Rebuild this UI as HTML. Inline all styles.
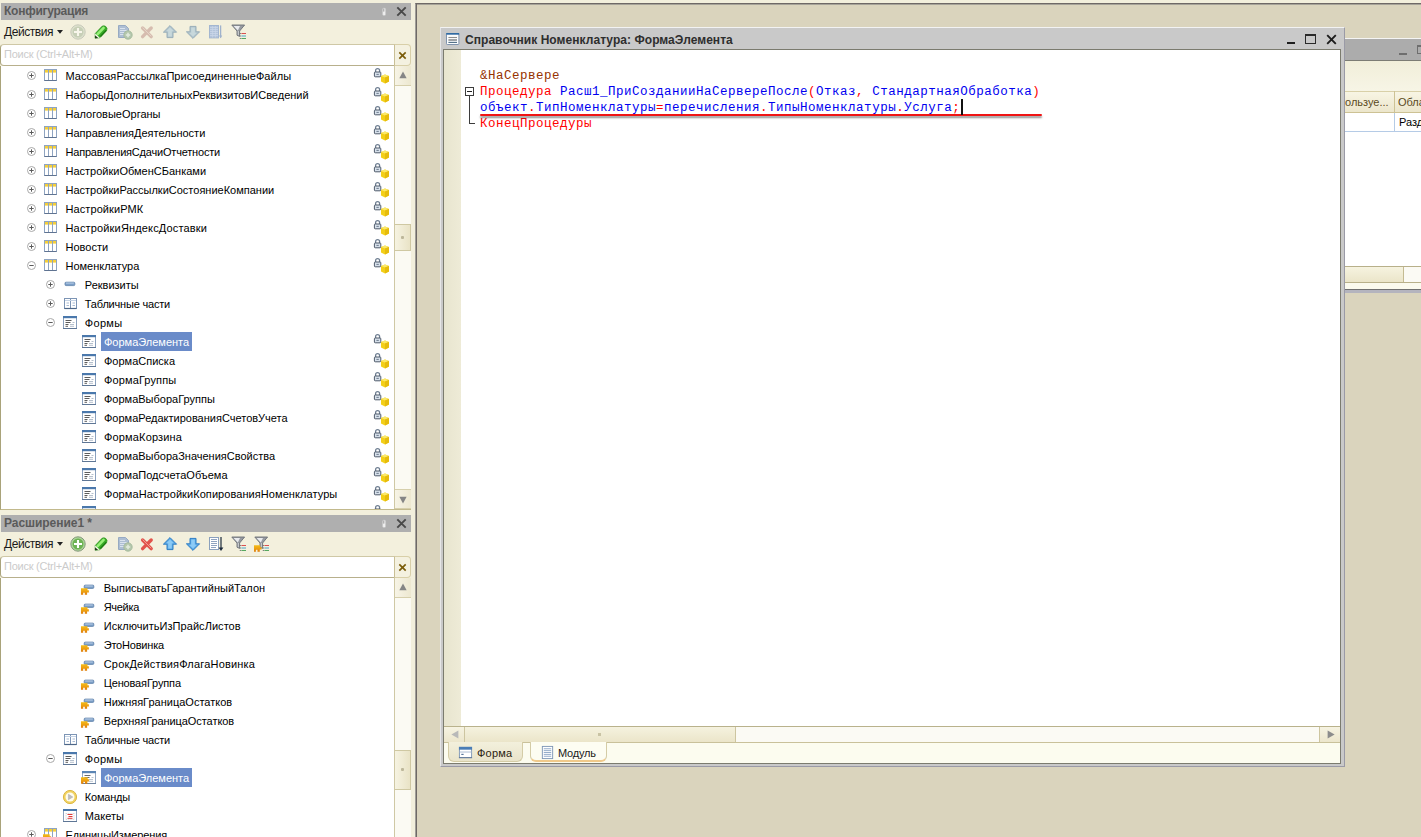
<!DOCTYPE html>
<html lang="ru"><head><meta charset="utf-8"><title>Конфигуратор</title>
<style>

html,body{margin:0;padding:0}
body{width:1421px;height:837px;overflow:hidden;position:relative;background:#f2efdc;
 font-family:"Liberation Sans",sans-serif;font-size:12px;color:#000}
.ic{position:absolute;overflow:visible}
.ptitle{position:absolute;left:1px;width:410px;height:17px;background:#afafaf}
.ptitle span{position:absolute;left:3px;top:0;line-height:16px;font-weight:bold;font-size:12px;color:#5a5a5a;letter-spacing:-0.6px;white-space:nowrap}
.tbar{position:absolute;left:0;width:412px;height:24px;background:#f3f0dd}
.tbar .act{position:absolute;left:4px;top:4px;line-height:17px;font-size:12px;color:#1a1a1a;white-space:nowrap;letter-spacing:-0.45px}
.search{position:absolute;left:0;width:395px;height:22px;box-sizing:border-box;background:#fff;border:1px solid #b8b08c;border-top-color:#cfc8a6;border-left-color:#aaa47c;border-radius:4px 0 0 4px}
.search span{position:absolute;left:3px;top:2px;line-height:15px;font-size:11px;color:#cbcbcb;white-space:nowrap;letter-spacing:-0.24px}
.sbtn{position:absolute;left:394px;width:17px;height:22px;box-sizing:border-box;background:#f4f1e0;border:1px solid #d8cfa8;border-left:1px solid #c9bf95;border-radius:0 4px 4px 0}
.tree{position:absolute;left:0;width:411px;background:#fff;overflow:hidden;border-left:1px solid #a9a37a;border-bottom:1px solid #c2b98c;box-sizing:border-box}
.tree>*{margin-left:-1px}
.tx{position:absolute;height:19px;line-height:20px;font-size:11px;white-space:nowrap;color:#000;padding:0 3px;margin-left:-4px}
.tx.sel{background:#6a8bc9;color:#fff}
.vsb{position:absolute;left:394px;top:0;width:17px;background:#fbfaf3;border-left:1px solid #cfc8a4;border-right:1px solid #d8d2b4}
.vbtn{position:absolute;left:0;width:17px;height:20px;background:linear-gradient(90deg,#f7f4e6,#ece7cf);border-bottom:1px solid #d6cfac;box-sizing:border-box}
.vthumb{position:absolute;left:0;width:16px;background:linear-gradient(90deg,#f6f3e2,#e9e3c6);border:1px solid #cfc8a2;border-left:none;box-sizing:border-box}
.mdi{position:absolute;left:415px;top:3px;width:1010px;height:840px;background:#dad4bd;border-left:1px solid #a09e98;border-top:1px solid #6e6966;box-shadow:inset 1px 0 0 #6e6966,inset 0 1px 0 #a6a399;box-sizing:border-box;overflow:hidden}
.win{position:absolute;background:#c9c9c9;box-sizing:border-box}
.code{position:absolute;white-space:pre;font-family:"Liberation Mono",monospace;font-size:12.5px;letter-spacing:0.5px;line-height:17px;height:16px}
.kw{color:#f00}.id{color:#0000f0}.pp{color:#963200}
.vthumb i{position:absolute;left:6px;top:50%;margin-top:-2px;width:3px;height:3px;background:#bdb79a;border-radius:1px}

</style></head>
<body>
<svg width="0" height="0" style="position:absolute">
<defs>

<symbol id="plus" viewBox="0 0 9 9"><circle cx="4.5" cy="4.5" r="4" fill="#fff" stroke="#a9a9a9" stroke-width="1"/><path d="M2.3 4.5H6.7M4.5 2.3V6.7" stroke="#5a5a5a" stroke-width="1"/></symbol>
<symbol id="minus" viewBox="0 0 9 9"><circle cx="4.5" cy="4.5" r="4" fill="#fff" stroke="#a9a9a9" stroke-width="1"/><path d="M2.3 4.5H6.7" stroke="#5a5a5a" stroke-width="1"/></symbol>

<symbol id="tbl" viewBox="0 0 16 16"><rect x="1.5" y="1.5" width="12" height="11" fill="#fff" stroke="#8fa4c1" stroke-width="1"/><rect x="2" y="2" width="11" height="2.6" fill="#f5cf3a"/><path d="M5.5 1.5V12.5M9.5 1.5V12.5" stroke="#8fa4c1" stroke-width="1"/><path d="M1.5 12.5H13.5" stroke="#5f7391" stroke-width="1"/></symbol>
<symbol id="tbladopt" viewBox="0 0 16 16"><use href="#tbl"/><use href="#puzzle" x="0" y="7"/></symbol>

<symbol id="attr" viewBox="0 0 16 16"><rect x="2" y="5.2" width="9.8" height="3.4" rx="1" fill="#7c9fc8" stroke="#5f81aa" stroke-width="0.8"/><path d="M3 6.1H10.8" stroke="#c0d4ea" stroke-width="0.9"/></symbol>
<linearGradient id="pzg" x1="0" y1="0" x2="0" y2="1"><stop offset="0" stop-color="#f4bd1a"/><stop offset="0.5" stop-color="#eda010"/><stop offset="1" stop-color="#de7c08"/></linearGradient>
<symbol id="puzzle" viewBox="0 0 9 8" width="9" height="8"><path d="M0 0.2H6.7V2.3H8.1V4.4H6.3V6.8H4V4.7H2.4V6.8H0Z" fill="url(#pzg)"/></symbol>
<symbol id="attradopt" viewBox="0 0 16 16"><rect x="5.2" y="5.1" width="9.6" height="3.3" rx="1" fill="#7c9fc8" stroke="#5f81aa" stroke-width="0.8"/><path d="M6.2 6H13.8" stroke="#c6d8ec" stroke-width="0.9"/><use href="#puzzle" x="1.8" y="8"/></symbol>

<symbol id="tabpart" viewBox="0 0 16 16"><rect x="1.5" y="2.5" width="12" height="10" fill="#fff" stroke="#7d95b5" stroke-width="1"/><path d="M7.5 2.5V12.5" stroke="#7d95b5" stroke-width="1"/><path d="M2 4.5H13" stroke="#c4d2e4" stroke-width="1"/><path d="M3.5 7H6M9.5 7H12M3.5 9.5H6M9.5 9.5H12" stroke="#a9bbd3" stroke-width="1"/><path d="M1.5 12.5H13.5" stroke="#4d6688" stroke-width="1.2"/></symbol>

<symbol id="form" viewBox="0 0 16 16"><rect x="1.5" y="1.5" width="13" height="12" fill="#fff" stroke="#8aa0bd" stroke-width="1"/><rect x="1" y="1" width="14" height="2.2" fill="#4a78ac"/><path d="M3.5 5.5H9.5M3.5 7.5H8.5M3.5 9.5H6.5M3.5 11.3H6" stroke="#5c5c5c" stroke-width="1"/><path d="M10.5 7.5H12.5M8 9.5H12M8 11.3H12" stroke="#b4bfcc" stroke-width="1"/><path d="M1 13.5H15" stroke="#5e7695" stroke-width="1"/></symbol>
<symbol id="formadopt" viewBox="0 0 16 16"><g opacity="0.9"><use href="#form"/></g><use href="#puzzle" x="0" y="7"/></symbol>

<symbol id="cmd" viewBox="0 0 16 16"><circle cx="8" cy="8" r="6.6" fill="#f1d362" stroke="#ddb846" stroke-width="1"/><circle cx="8" cy="8" r="4.5" fill="#fffcee"/><path d="M6.4 5.2L10.8 8L6.4 10.8Z" fill="#bdbdbd" stroke="#a8a8a8" stroke-width="0.5"/></symbol>

<symbol id="maket" viewBox="0 0 16 16"><rect x="1.5" y="1.5" width="13" height="12" fill="#fff" stroke="#8aa0bd" stroke-width="1"/><rect x="1" y="1" width="14" height="2" fill="#4a78ac"/><path d="M4 5V12M12 5V12M4 5.5H12M4 11.5H12" stroke="#c9c9d2" stroke-width="0.8" stroke-dasharray="1.2 1"/><path d="M5.5 6.5H10.5M6.5 8.5H10.5M5.5 10.3H10.5" stroke="#e23a3a" stroke-width="1"/><path d="M1 13.5H15" stroke="#5e7695" stroke-width="1"/></symbol>

<symbol id="lock" viewBox="0 0 18 18"><path d="M2.6 5.4V3.6Q2.6 1.6 4.6 1.6Q6.6 1.6 6.6 3.6V5.4" fill="none" stroke="#6f7f92" stroke-width="1.3"/><rect x="1.4" y="5" width="6.4" height="4.8" rx="0.8" fill="#d7e0ea" stroke="#4f5b6b" stroke-width="1"/><path d="M3.4 7.4H5.8" stroke="#6d7c8f" stroke-width="1"/>
<path d="M8 9L12 7.4L16 9V14.4L12 16.4L8 14.4Z" fill="#f3cf19"/><path d="M8 9L12 10.6L16 9L12 7.4Z" fill="#fbe86a"/><path d="M12 10.6V16.4L16 14.4V9Z" fill="#e6bc0c"/></symbol>

<symbol id="pin" viewBox="0 0 12 12"><rect x="4.6" y="2" width="3" height="7.6" rx="1.4" fill="#efefef" stroke="#c4c4c4" stroke-width="0.6"/><rect x="5.3" y="2.6" width="1" height="3" fill="#9a9a9a"/></symbol>
<symbol id="closex" viewBox="0 0 11 11"><path d="M1.3 1.3L9.7 9.7M9.7 1.3L1.3 9.7" stroke="#484848" stroke-width="1.9" stroke-linecap="butt"/></symbol>
<symbol id="brownx" viewBox="0 0 11 11"><path d="M1.6 1.6L9.4 9.4M9.4 1.6L1.6 9.4" stroke="#7a5c0a" stroke-width="2"/></symbol>
<symbol id="arrup" viewBox="0 0 9 8"><path d="M4.5 0.2L8.6 7.6H0.4Z" fill="#858585"/></symbol>
<symbol id="arrdn" viewBox="0 0 9 8"><path d="M4.5 7.8L8.6 0.4H0.4Z" fill="#858585"/></symbol>
<symbol id="arrlt" viewBox="0 0 8 9"><path d="M0.4 4.5L7.4 0.6V8.4Z" fill="#b9b9b9"/></symbol>
<symbol id="arrrt" viewBox="0 0 8 9"><path d="M7.6 4.5L0.6 0.6V8.4Z" fill="#8c8c8c"/></symbol>

<!-- toolbar icons (16x16) -->
<symbol id="t_add" viewBox="0 0 16 16"><circle cx="8" cy="8" r="7.2" fill="#acd698" stroke="#84987c" stroke-width="1"/><circle cx="8" cy="8" r="5.5" fill="#6db254"/><path d="M8 4V12M4 8H12" stroke="#fff" stroke-width="2.1"/></symbol>
<symbol id="t_edit" viewBox="0 0 16 16"><path d="M2 14.3L2.2 9.5L9 2.2Q11.2 1 12.9 2.6Q14.9 4.4 13.7 6.4L6.8 13.8Z" fill="#39ad27" stroke="#2b8a1f" stroke-width="0.6"/><path d="M4.6 10.2L10.6 3.9" stroke="#98f078" stroke-width="2.6" stroke-linecap="round"/><path d="M7.4 12.6L13.3 6.3" stroke="#1f7d14" stroke-width="1.5"/><path d="M2 14.3L2.2 9.5L6.8 13.8Z" fill="#fbfbf0"/><path d="M2 14.3L2.1 11.2L5.2 14Z" fill="#1c3a12"/></symbol>
<symbol id="t_copy" viewBox="0 0 16 16"><path d="M1.5 1.5H8.5L11.5 4.5V13.5H1.5Z" fill="#adbed3" stroke="#97aac2" stroke-width="1"/><path d="M3 4.5H8M3 6.5H10M3 8.5H10M3 10.5H7" stroke="#d9e2ee" stroke-width="1"/><circle cx="11" cy="11" r="4.2" fill="#b4c7ad" stroke="#a0b697" stroke-width="0.8"/><path d="M11 8.8V13.2M8.8 11H13.2" stroke="#e2ebde" stroke-width="1.5"/></symbol>
<symbol id="t_del" viewBox="0 0 16 16"><path d="M3.6 4L12.2 12.6M12.2 4L3.6 12.6" stroke="#e2534b" stroke-width="3.4" stroke-linecap="round"/><path d="M3.8 3.8L12 12" stroke="#f09a90" stroke-width="1" stroke-linecap="round"/></symbol>
<symbol id="t_up" viewBox="0 0 16 16"><path d="M8 1.6L14.6 8.2H11V13.6H5V8.2H1.4Z" fill="#5aa9e6" stroke="#2f7ec4" stroke-width="1" stroke-linejoin="round"/><path d="M8 3.4L11.8 7.2H9.8V12.4H6.2V7.2H4.2Z" fill="#8ccbf6"/></symbol>
<symbol id="t_dn" viewBox="0 0 16 16"><path d="M8 14.4L14.6 7.8H11V2.4H5V7.8H1.4Z" fill="#5aa9e6" stroke="#2f7ec4" stroke-width="1" stroke-linejoin="round"/><path d="M8 12.6L11.8 8.8H9.8V3.6H6.2V8.8H4.2Z" fill="#8ccbf6"/></symbol>
<symbol id="t_sort" viewBox="0 0 16 16"><rect x="1.5" y="1.5" width="9" height="12" fill="#fff" stroke="#8aa0bd" stroke-width="1"/><path d="M3 3.5H9M3 5.5H9M3 7.5H9M3 9.5H9M3 11.5H8" stroke="#8ea3c0" stroke-width="1"/><path d="M13 1V13" stroke="#1c2a3c" stroke-width="1.2"/><path d="M10.6 11.4L13 15L15.4 11.4Z" fill="#1c2a3c"/></symbol>
<symbol id="t_filter" viewBox="0 0 16 16"><path d="M0.8 1H13.6L8.6 7V12.4L6 11.2V7Z" fill="#979ba1" stroke="#6c7077" stroke-width="0.9" stroke-linejoin="round"/><path d="M2.6 1.9H9L6.8 6.4Z" fill="#e9ebee"/><path d="M7.3 7V11.2" stroke="#d7dadd" stroke-width="0.9"/><path d="M10.4 9.5H15" stroke="#d85050" stroke-width="1"/><path d="M10.4 12H15" stroke="#4aa3c8" stroke-width="1"/><path d="M10.4 14.5H15" stroke="#55a860" stroke-width="1"/><path d="M8.8 9.5H9.8M8.8 12H9.8M8.8 14.5H9.8" stroke="#666" stroke-width="1"/></symbol>
<symbol id="t_sortd" viewBox="0 0 16 16"><rect x="1.5" y="1.5" width="9" height="12.4" fill="#b3c4db" stroke="#a3b6d0" stroke-width="1"/><path d="M2 3.5H10M2 5.5H10M2 7.5H10M2 9.5H10M2 11.5H10" stroke="#c9d6e8" stroke-width="0.8"/><path d="M4.5 2V13.5M7.5 2V13.5" stroke="#c9d6e8" stroke-width="0.6"/><path d="M12.6 1.4V13.6" stroke="#9fb2cc" stroke-width="1.3"/><path d="M11 11.6L12.6 14.2L14.2 11.6Z" fill="#9fb2cc"/></symbol>
<symbol id="t_filter2" viewBox="0 0 16 16"><use href="#t_filter"/><use href="#puzzle" x="-0.5" y="9"/></symbol>

<symbol id="w_mod" viewBox="0 0 16 16"><rect x="1.5" y="2.5" width="12.4" height="11" rx="0.8" fill="#fbfcfd" stroke="#7f93ad" stroke-width="1"/><rect x="1.2" y="2" width="13" height="1.7" fill="#2f6aa3"/><path d="M3.4 6.5H12" stroke="#8d8d8d" stroke-width="1.1"/><path d="M3.4 9H12" stroke="#545a62" stroke-width="1.1"/><path d="M3.4 11.4H12" stroke="#4d6b84" stroke-width="1.1"/></symbol>
<symbol id="tab_form" viewBox="0 0 16 16"><rect x="1.5" y="2.5" width="13" height="11" fill="#fff" stroke="#7f97b6" stroke-width="1"/><rect x="1" y="2" width="14" height="3" fill="#4a7db6"/><path d="M1.5 7.5H14.5" stroke="#a7b9d0" stroke-width="1"/><path d="M3.5 10H6" stroke="#4f6f96" stroke-width="1.2"/><path d="M1 13.5H15" stroke="#5e7695" stroke-width="1"/></symbol>
<symbol id="tab_mod" viewBox="0 0 16 16"><rect x="2.5" y="1.5" width="11" height="13" fill="#fff" stroke="#7f97b6" stroke-width="1"/><path d="M4 4H12M4 6H12M4 8H12M4 10H12M4 12H12" stroke="#8ea7c6" stroke-width="1"/></symbol>

</defs>
</svg>

<!-- ===== left panel 1 ===== -->
<div class="ptitle" style="top:3px"><span style="letter-spacing:-0.25px">Конфигурация</span>
<svg class="ic" style="left:377px;top:3px" width="12" height="12"><use href="#pin"/></svg>
<svg class="ic" style="left:395px;top:3px" width="11" height="11"><use href="#closex"/></svg>
</div>
<div class="tbar" style="top:20px"><span class="act">Действия</span>
<svg class="ic" style="left:57px;top:10px" width="6" height="4"><path d="M0 0H6L3 3.8Z" fill="#222"/></svg>
<svg class="ic" style="left:70px;top:4px;opacity:.42;filter:grayscale(.65)" width="16" height="16"><use href="#t_add"/></svg>
<svg class="ic" style="left:93px;top:4px" width="16" height="16"><use href="#t_edit"/></svg>
<svg class="ic" style="left:117px;top:4px" width="16" height="16"><use href="#t_copy"/></svg>
<svg class="ic" style="left:139px;top:4px;opacity:.36;filter:grayscale(.55)" width="16" height="16"><use href="#t_del"/></svg>
<svg class="ic" style="left:162px;top:4px;opacity:.55;filter:grayscale(.5)" width="16" height="16"><use href="#t_up"/></svg>
<svg class="ic" style="left:185px;top:4px;opacity:.55;filter:grayscale(.5)" width="16" height="16"><use href="#t_dn"/></svg>
<svg class="ic" style="left:208px;top:4px" width="16" height="16"><use href="#t_sortd"/></svg>
<svg class="ic" style="left:231px;top:4px" width="16" height="16"><use href="#t_filter"/></svg></div>
<div class="search" style="top:44px"><span>Поиск (Ctrl+Alt+M)</span></div>
<div class="sbtn" style="top:44px"><svg width="9" height="9" style="position:absolute;left:3px;top:6px"><use href="#brownx"/></svg></div>
<div class="tree" style="top:66px;height:444px">
<svg class="ic" style="left:27px;top:5px" width="9" height="9"><use href="#plus"/></svg>
<svg class="ic" style="left:43px;top:2px" width="16" height="16"><use href="#tbl"/></svg>
<span class="tx" style="left:65.5px;top:0px;letter-spacing:0.055px">МассоваяРассылкаПрисоединенныеФайлы</span>
<svg class="ic" style="left:373px;top:1px" width="18" height="18"><use href="#lock"/></svg>
<svg class="ic" style="left:27px;top:24px" width="9" height="9"><use href="#plus"/></svg>
<svg class="ic" style="left:43px;top:21px" width="16" height="16"><use href="#tbl"/></svg>
<span class="tx" style="left:65.5px;top:19px">НаборыДополнительныхРеквизитовИСведений</span>
<svg class="ic" style="left:373px;top:20px" width="18" height="18"><use href="#lock"/></svg>
<svg class="ic" style="left:27px;top:43px" width="9" height="9"><use href="#plus"/></svg>
<svg class="ic" style="left:43px;top:40px" width="16" height="16"><use href="#tbl"/></svg>
<span class="tx" style="left:65.5px;top:38px">НалоговыеОрганы</span>
<svg class="ic" style="left:373px;top:39px" width="18" height="18"><use href="#lock"/></svg>
<svg class="ic" style="left:27px;top:62px" width="9" height="9"><use href="#plus"/></svg>
<svg class="ic" style="left:43px;top:59px" width="16" height="16"><use href="#tbl"/></svg>
<span class="tx" style="left:65.5px;top:57px">НаправленияДеятельности</span>
<svg class="ic" style="left:373px;top:58px" width="18" height="18"><use href="#lock"/></svg>
<svg class="ic" style="left:27px;top:81px" width="9" height="9"><use href="#plus"/></svg>
<svg class="ic" style="left:43px;top:78px" width="16" height="16"><use href="#tbl"/></svg>
<span class="tx" style="left:65.5px;top:76px;letter-spacing:-0.2px">НаправленияСдачиОтчетности</span>
<svg class="ic" style="left:373px;top:77px" width="18" height="18"><use href="#lock"/></svg>
<svg class="ic" style="left:27px;top:100px" width="9" height="9"><use href="#plus"/></svg>
<svg class="ic" style="left:43px;top:97px" width="16" height="16"><use href="#tbl"/></svg>
<span class="tx" style="left:65.5px;top:95px">НастройкиОбменСБанками</span>
<svg class="ic" style="left:373px;top:96px" width="18" height="18"><use href="#lock"/></svg>
<svg class="ic" style="left:27px;top:119px" width="9" height="9"><use href="#plus"/></svg>
<svg class="ic" style="left:43px;top:116px" width="16" height="16"><use href="#tbl"/></svg>
<span class="tx" style="left:65.5px;top:114px">НастройкиРассылкиСостояниеКомпании</span>
<svg class="ic" style="left:373px;top:115px" width="18" height="18"><use href="#lock"/></svg>
<svg class="ic" style="left:27px;top:138px" width="9" height="9"><use href="#plus"/></svg>
<svg class="ic" style="left:43px;top:135px" width="16" height="16"><use href="#tbl"/></svg>
<span class="tx" style="left:65.5px;top:133px;letter-spacing:0.09px">НастройкиРМК</span>
<svg class="ic" style="left:373px;top:134px" width="18" height="18"><use href="#lock"/></svg>
<svg class="ic" style="left:27px;top:157px" width="9" height="9"><use href="#plus"/></svg>
<svg class="ic" style="left:43px;top:154px" width="16" height="16"><use href="#tbl"/></svg>
<span class="tx" style="left:65.5px;top:152px;letter-spacing:0.16px">НастройкиЯндексДоставки</span>
<svg class="ic" style="left:373px;top:153px" width="18" height="18"><use href="#lock"/></svg>
<svg class="ic" style="left:27px;top:176px" width="9" height="9"><use href="#plus"/></svg>
<svg class="ic" style="left:43px;top:173px" width="16" height="16"><use href="#tbl"/></svg>
<span class="tx" style="left:65.5px;top:171px">Новости</span>
<svg class="ic" style="left:373px;top:172px" width="18" height="18"><use href="#lock"/></svg>
<svg class="ic" style="left:27px;top:195px" width="9" height="9"><use href="#minus"/></svg>
<svg class="ic" style="left:43px;top:192px" width="16" height="16"><use href="#tbl"/></svg>
<span class="tx" style="left:65.5px;top:190px">Номенклатура</span>
<svg class="ic" style="left:373px;top:191px" width="18" height="18"><use href="#lock"/></svg>
<svg class="ic" style="left:46px;top:214px" width="9" height="9"><use href="#plus"/></svg>
<svg class="ic" style="left:63px;top:211px" width="16" height="16"><use href="#attr"/></svg>
<span class="tx" style="left:84.8px;top:209px">Реквизиты</span>
<svg class="ic" style="left:46px;top:233px" width="9" height="9"><use href="#plus"/></svg>
<svg class="ic" style="left:63px;top:230px" width="16" height="16"><use href="#tabpart"/></svg>
<span class="tx" style="left:84.8px;top:228px;letter-spacing:-0.19px">Табличные части</span>
<svg class="ic" style="left:46px;top:252px" width="9" height="9"><use href="#minus"/></svg>
<svg class="ic" style="left:62px;top:249px" width="16" height="16"><use href="#form"/></svg>
<span class="tx" style="left:84.8px;top:247px;letter-spacing:0.3px">Формы</span>
<svg class="ic" style="left:81px;top:268px" width="16" height="16"><use href="#form"/></svg>
<span class="tx sel" style="left:104px;top:266px">ФормаЭлемента</span>
<svg class="ic" style="left:373px;top:267px" width="18" height="18"><use href="#lock"/></svg>
<svg class="ic" style="left:81px;top:287px" width="16" height="16"><use href="#form"/></svg>
<span class="tx" style="left:104px;top:285px">ФормаСписка</span>
<svg class="ic" style="left:373px;top:286px" width="18" height="18"><use href="#lock"/></svg>
<svg class="ic" style="left:81px;top:306px" width="16" height="16"><use href="#form"/></svg>
<span class="tx" style="left:104px;top:304px;letter-spacing:0.12px">ФормаГруппы</span>
<svg class="ic" style="left:373px;top:305px" width="18" height="18"><use href="#lock"/></svg>
<svg class="ic" style="left:81px;top:325px" width="16" height="16"><use href="#form"/></svg>
<span class="tx" style="left:104px;top:323px">ФормаВыбораГруппы</span>
<svg class="ic" style="left:373px;top:324px" width="18" height="18"><use href="#lock"/></svg>
<svg class="ic" style="left:81px;top:344px" width="16" height="16"><use href="#form"/></svg>
<span class="tx" style="left:104px;top:342px">ФормаРедактированияСчетовУчета</span>
<svg class="ic" style="left:373px;top:343px" width="18" height="18"><use href="#lock"/></svg>
<svg class="ic" style="left:81px;top:363px" width="16" height="16"><use href="#form"/></svg>
<span class="tx" style="left:104px;top:361px;letter-spacing:0.16px">ФормаКорзина</span>
<svg class="ic" style="left:373px;top:362px" width="18" height="18"><use href="#lock"/></svg>
<svg class="ic" style="left:81px;top:382px" width="16" height="16"><use href="#form"/></svg>
<span class="tx" style="left:104px;top:380px">ФормаВыбораЗначенияСвойства</span>
<svg class="ic" style="left:373px;top:381px" width="18" height="18"><use href="#lock"/></svg>
<svg class="ic" style="left:81px;top:401px" width="16" height="16"><use href="#form"/></svg>
<span class="tx" style="left:104px;top:399px">ФормаПодсчетаОбъема</span>
<svg class="ic" style="left:373px;top:400px" width="18" height="18"><use href="#lock"/></svg>
<svg class="ic" style="left:81px;top:420px" width="16" height="16"><use href="#form"/></svg>
<span class="tx" style="left:104px;top:418px;letter-spacing:0.07px">ФормаНастройкиКопированияНоменклатуры</span>
<svg class="ic" style="left:373px;top:419px" width="18" height="18"><use href="#lock"/></svg>
<svg class="ic" style="left:81px;top:439px" width="16" height="16"><use href="#form"/></svg>
<span class="tx" style="left:104px;top:437px">ФормаИзмененияЗначенияНоменклатуры</span>
<svg class="ic" style="left:373px;top:438px" width="18" height="18"><use href="#lock"/></svg>
<div class="vsb" style="height:443px">
 <div class="vbtn" style="top:0"><svg width="8" height="8" style="position:absolute;left:4px;top:5px"><use href="#arrup"/></svg></div>
 <div class="vthumb" style="top:158px;height:27px"><i></i></div>
 <div class="vbtn" style="top:423px;border-top:1px solid #d6cfac"><svg width="8" height="8" style="position:absolute;left:4px;top:6px"><use href="#arrdn"/></svg></div>
</div>
</div>

<!-- ===== left panel 2 ===== -->
<div class="ptitle" style="top:515px"><span style="letter-spacing:-0.05px">Расширение1 *</span>
<svg class="ic" style="left:377px;top:3px" width="12" height="12"><use href="#pin"/></svg>
<svg class="ic" style="left:395px;top:3px" width="11" height="11"><use href="#closex"/></svg>
</div>
<div class="tbar" style="top:532px"><span class="act">Действия</span>
<svg class="ic" style="left:57px;top:10px" width="6" height="4"><path d="M0 0H6L3 3.8Z" fill="#222"/></svg>
<svg class="ic" style="left:70px;top:4px" width="16" height="16"><use href="#t_add"/></svg>
<svg class="ic" style="left:93px;top:4px" width="16" height="16"><use href="#t_edit"/></svg>
<svg class="ic" style="left:117px;top:4px" width="16" height="16"><use href="#t_copy"/></svg>
<svg class="ic" style="left:139px;top:4px" width="16" height="16"><use href="#t_del"/></svg>
<svg class="ic" style="left:162px;top:4px" width="16" height="16"><use href="#t_up"/></svg>
<svg class="ic" style="left:185px;top:4px" width="16" height="16"><use href="#t_dn"/></svg>
<svg class="ic" style="left:208px;top:4px" width="16" height="16"><use href="#t_sort"/></svg>
<svg class="ic" style="left:231px;top:4px" width="16" height="16"><use href="#t_filter"/></svg>
<svg class="ic" style="left:254px;top:4px" width="16" height="16"><use href="#t_filter2"/></svg></div>
<div class="search" style="top:556px"><span>Поиск (Ctrl+Alt+M)</span></div>
<div class="sbtn" style="top:556px"><svg width="9" height="9" style="position:absolute;left:3px;top:6px"><use href="#brownx"/></svg></div>
<div class="tree" style="top:578px;height:265px">
<svg class="ic" style="left:79px;top:2px" width="16" height="16"><use href="#attradopt"/></svg>
<span class="tx" style="left:103.7px;top:0px">ВыписыватьГарантийныйТалон</span>
<svg class="ic" style="left:79px;top:21px" width="16" height="16"><use href="#attradopt"/></svg>
<span class="tx" style="left:103.7px;top:19px;letter-spacing:-0.3px">Ячейка</span>
<svg class="ic" style="left:79px;top:40px" width="16" height="16"><use href="#attradopt"/></svg>
<span class="tx" style="left:103.7px;top:38px;letter-spacing:0.05px">ИсключитьИзПрайсЛистов</span>
<svg class="ic" style="left:79px;top:59px" width="16" height="16"><use href="#attradopt"/></svg>
<span class="tx" style="left:103.7px;top:57px;letter-spacing:-0.2px">ЭтоНовинка</span>
<svg class="ic" style="left:79px;top:78px" width="16" height="16"><use href="#attradopt"/></svg>
<span class="tx" style="left:103.7px;top:76px;letter-spacing:0.19px">СрокДействияФлагаНовинка</span>
<svg class="ic" style="left:79px;top:97px" width="16" height="16"><use href="#attradopt"/></svg>
<span class="tx" style="left:103.7px;top:95px;letter-spacing:-0.15px">ЦеноваяГруппа</span>
<svg class="ic" style="left:79px;top:116px" width="16" height="16"><use href="#attradopt"/></svg>
<span class="tx" style="left:103.7px;top:114px">НижняяГраницаОстатков</span>
<svg class="ic" style="left:79px;top:135px" width="16" height="16"><use href="#attradopt"/></svg>
<span class="tx" style="left:103.7px;top:133px;letter-spacing:-0.07px">ВерхняяГраницаОстатков</span>
<svg class="ic" style="left:63px;top:154px" width="16" height="16"><use href="#tabpart"/></svg>
<span class="tx" style="left:84.8px;top:152px;letter-spacing:-0.19px">Табличные части</span>
<svg class="ic" style="left:46px;top:176px" width="9" height="9"><use href="#minus"/></svg>
<svg class="ic" style="left:62px;top:173px" width="16" height="16"><use href="#form"/></svg>
<span class="tx" style="left:84.8px;top:171px;letter-spacing:0.3px">Формы</span>
<svg class="ic" style="left:81px;top:192px" width="16" height="16"><use href="#formadopt"/></svg>
<span class="tx sel" style="left:104px;top:190px">ФормаЭлемента</span>
<svg class="ic" style="left:62px;top:211px" width="16" height="16"><use href="#cmd"/></svg>
<span class="tx" style="left:84.8px;top:209px;letter-spacing:-0.2px">Команды</span>
<svg class="ic" style="left:62px;top:230px" width="16" height="16"><use href="#maket"/></svg>
<span class="tx" style="left:84.8px;top:228px">Макеты</span>
<svg class="ic" style="left:27px;top:252px" width="9" height="9"><use href="#plus"/></svg>
<svg class="ic" style="left:43px;top:249px" width="16" height="16"><use href="#tbladopt"/></svg>
<span class="tx" style="left:65.5px;top:247px;letter-spacing:-0.11px">ЕдиницыИзмерения</span>
<div class="vsb" style="height:259px">
 <div class="vbtn" style="top:0"><svg width="8" height="8" style="position:absolute;left:4px;top:5px"><use href="#arrup"/></svg></div>
 <div class="vthumb" style="top:172px;height:40px"><i></i></div>
</div>
</div>

<!-- ===== MDI area ===== -->
<div class="mdi"></div>

<!-- background window (partially hidden) -->
<div style="position:absolute;left:1343px;top:38px;width:80px;height:252px;background:#fff;border-top:1px solid #f4f4f4"></div>
<div style="position:absolute;left:1343px;top:39px;width:80px;height:21px;background:#acacac;border-bottom:1px solid #7c7c74"></div>
<div style="position:absolute;left:1399px;top:53px;width:8px;height:2px;background:#6e6e6e"></div>
<div style="position:absolute;left:1417px;top:45px;width:8px;height:9px;border:1px solid #6e6e6e;border-top-width:2px;box-sizing:border-box"></div>
<div style="position:absolute;left:1343px;top:61px;width:80px;height:30px;background:linear-gradient(#f1eed9,#f7f5e6)"></div>
<div style="position:absolute;left:1343px;top:91px;width:80px;height:22px;box-sizing:border-box;background:linear-gradient(#f8f5e4,#ece6cc);border-top:1px solid #d9d0a8;border-bottom:1px solid #cdc294"></div>
<div style="position:absolute;left:1394px;top:91px;width:1px;height:22px;background:#cdc294"></div>
<div style="position:absolute;left:1345px;top:93px;line-height:18px;font-size:11px;color:#5b4a1c;white-space:nowrap">ользуе...</div>
<div style="position:absolute;left:1398px;top:93px;line-height:18px;font-size:11px;color:#5b4a1c;white-space:nowrap">Область</div>
<div style="position:absolute;left:1343px;top:131px;width:80px;height:1px;background:#b5cbe6"></div>
<div style="position:absolute;left:1394px;top:113px;width:1px;height:18px;background:#b5cbe6"></div>
<div style="position:absolute;left:1399px;top:113px;line-height:19px;font-size:11px;color:#000;white-space:nowrap">Разделение</div>
<div style="position:absolute;left:1343px;top:266px;width:80px;height:17px;box-sizing:border-box;background:#fbfaf4;border-top:1px solid #b8b08a;border-bottom:1px solid #b8b08a"></div>
<div style="position:absolute;left:1343px;top:267px;width:61px;height:15px;box-sizing:border-box;background:linear-gradient(#f6f3e0,#ebe5c9);border-right:1px solid #c4bb92"></div>
<div style="position:absolute;left:1343px;top:283px;width:80px;height:6px;background:#fbfaee"></div>
<div style="position:absolute;left:1343px;top:289px;width:80px;height:1px;background:#707070"></div>
<div style="position:absolute;left:1343px;top:290px;width:80px;height:3px;background:#b4b4be"></div>

<!-- main module window -->
<div class="win" style="left:440px;top:27px;width:905px;height:740px;border-top:1px solid #f2f2f2;border-left:1px solid #e6e6e6;border-right:1px solid #9a9aa6;border-bottom:1px solid #9a9aa6"></div>
<svg class="ic" style="left:445px;top:31px" width="16" height="16"><use href="#w_mod"/></svg>
<div style="position:absolute;left:465px;top:32px;line-height:17px;font-size:12px;font-weight:bold;color:#2e2e2e;letter-spacing:0.05px;white-space:nowrap">Справочник Номенклатура: ФормаЭлемента</div>
<div style="position:absolute;left:1287px;top:42px;width:8px;height:2px;background:#1e1e1e"></div>
<div style="position:absolute;left:1305px;top:34px;width:11px;height:10px;border:1px solid #2a2a2a;border-top-width:2px;box-sizing:border-box"></div>
<svg class="ic" style="left:1326px;top:34px" width="11" height="11"><path d="M1.2 1.2L9.8 9.8M9.8 1.2L1.2 9.8" stroke="#1c1c1c" stroke-width="1.9"/></svg>

<!-- client area -->
<div style="position:absolute;left:443px;top:49px;width:898px;height:715px;background:#7b7b6e"></div>
<div style="position:absolute;left:444px;top:50px;width:17px;height:676px;background:linear-gradient(90deg,#e8e5cf,#eeebd7)"></div>
<div style="position:absolute;left:461px;top:50px;width:879px;height:676px;background:#fff"></div>

<!-- code -->
<div class="code" style="left:480px;top:68px"><span class="pp">&amp;НаСервере</span></div>
<div class="code" style="left:480px;top:84px"><span class="kw">Процедура</span> <span class="id">Расш1_ПриСозданииНаСервереПосле</span><span class="kw">(</span><span class="id">Отказ</span><span class="kw">,</span> <span class="id">СтандартнаяОбработка</span><span class="kw">)</span></div>
<div class="code" style="left:480px;top:100px"><span class="id">объект</span><span class="kw">.</span><span class="id">ТипНоменклатуры</span><span class="kw">=</span><span class="id">перечисления</span><span class="kw">.</span><span class="id">ТипыНоменклатуры</span><span class="kw">.</span><span class="id">Услуга</span><span class="kw">;</span></div>
<div class="code" style="left:480px;top:116px"><span class="kw">КонецПроцедуры</span></div>
<div style="position:absolute;left:465px;top:87px;width:9px;height:9px;box-sizing:border-box;border:1px solid #3c3c3c;background:#fff"></div>
<div style="position:absolute;left:467px;top:91px;width:5px;height:1px;background:#222"></div>
<div style="position:absolute;left:469px;top:96px;width:1px;height:28px;background:#3c3c3c"></div>
<div style="position:absolute;left:469px;top:123px;width:6px;height:1px;background:#3c3c3c"></div>
<div style="position:absolute;left:480px;top:114px;width:562px;height:2px;background:#f01414;border-radius:1px;box-shadow:0 2px 2px rgba(70,70,70,.62)"></div>
<div style="position:absolute;left:961px;top:99px;width:2px;height:16px;background:#111"></div>

<!-- horizontal scrollbar -->
<div style="position:absolute;left:444px;top:726px;width:896px;height:17px;box-sizing:border-box;background:#fbfaf4;border-top:1px solid #b9b28c;border-bottom:1px solid #c9c19a"></div>
<div style="position:absolute;left:444px;top:727px;width:21px;height:15px;box-sizing:border-box;background:linear-gradient(#f6f3e2,#ece6cc);border-right:1px solid #cdc5a0"></div>
<svg class="ic" style="left:451px;top:730px" width="8" height="9"><use href="#arrlt"/></svg>
<div style="position:absolute;left:465px;top:727px;width:271px;height:15px;box-sizing:border-box;background:linear-gradient(#f5f2df,#ebe5c9);border-right:1px solid #cdc5a0"></div>
<div style="position:absolute;left:598px;top:733px;width:3px;height:3px;background:#c9c3a4"></div>
<div style="position:absolute;left:1319px;top:727px;width:21px;height:15px;box-sizing:border-box;background:linear-gradient(#f6f3e2,#ece6cc);border-left:1px solid #cdc5a0"></div>
<svg class="ic" style="left:1327px;top:730px" width="8" height="9"><use href="#arrrt"/></svg>

<!-- tab strip -->
<div style="position:absolute;left:444px;top:743px;width:896px;height:20px;background:#fcfcef"></div>
<div style="position:absolute;left:448px;top:742px;width:75px;height:20px;box-sizing:border-box;background:linear-gradient(#f3f0dc,#e9e4cb);border:1px solid #d4cca6;border-top:none;border-radius:0 0 6px 6px"></div>
<svg class="ic" style="left:458px;top:745px" width="15" height="15"><use href="#tab_form"/></svg>
<div style="position:absolute;left:477px;top:745px;line-height:17px;font-size:11px;color:#2b2210;letter-spacing:0.2px;white-space:nowrap">Форма</div>
<div style="position:absolute;left:530px;top:742px;width:77px;height:20px;box-sizing:border-box;background:#fdfdf2;border:1px solid #d4cca6;border-top:none;border-bottom:2px solid #f0c98a;border-radius:0 0 6px 6px"></div>
<svg class="ic" style="left:540px;top:745px" width="15" height="15"><use href="#tab_mod"/></svg>
<div style="position:absolute;left:558px;top:745px;line-height:17px;font-size:11px;color:#1a1a1a;letter-spacing:-0.2px;white-space:nowrap">Модуль</div>

</body></html>
